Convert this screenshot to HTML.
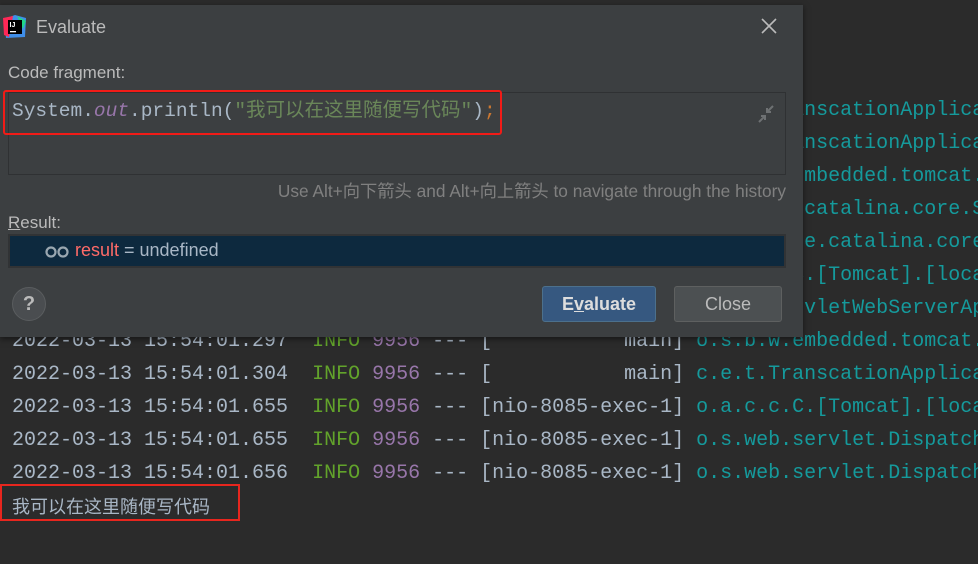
<!DOCTYPE html>
<html><head><meta charset="utf-8"><style>
*{margin:0;padding:0;box-sizing:border-box}
body{width:978px;height:564px;background:#2b2b2b;position:relative;overflow:hidden;font-family:"Liberation Sans","Noto Sans CJK SC",sans-serif}
.c{position:absolute;left:12px;font-family:"Liberation Mono","Noto Sans CJK SC",monospace;font-size:20px;white-space:pre;color:#a9b7c6;line-height:33px;height:33px}
.g{color:#62a32b}.p{color:#9876aa}.t{color:#159a9c}
.dlg{position:absolute;left:0;top:5px;width:803px;height:332px;background:#3c3f41;box-shadow:0 2px 6px rgba(0,0,0,.5)}
.a{position:absolute;white-space:pre}
</style></head><body>
<div class="c" style="top:-29px">                          |      |   |  /  /  /  /</div>
<div class="c" style="top:94px">2022-03-13 15:54:00.000  <span class="g">INFO</span> <span class="p">9956</span> --- [           main] <span class="t">c.e.t.TranscationApplica</span></div>
<div class="c" style="top:127px">2022-03-13 15:54:00.000  <span class="g">INFO</span> <span class="p">9956</span> --- [           main] <span class="t">c.e.t.TranscationApplica</span></div>
<div class="c" style="top:160px">2022-03-13 15:54:00.000  <span class="g">INFO</span> <span class="p">9956</span> --- [           main] <span class="t">o.s.b.w.embedded.tomcat.</span></div>
<div class="c" style="top:193px">2022-03-13 15:54:00.000  <span class="g">INFO</span> <span class="p">9956</span> --- [           main] <span class="t">o.apache.catalina.core.S</span></div>
<div class="c" style="top:226px">2022-03-13 15:54:00.000  <span class="g">INFO</span> <span class="p">9956</span> --- [           main] <span class="t">org.apache.catalina.core</span></div>
<div class="c" style="top:259px">2022-03-13 15:54:00.000  <span class="g">INFO</span> <span class="p">9956</span> --- [           main] <span class="t">o.a.c.c.C.[Tomcat].[loca</span></div>
<div class="c" style="top:292px">2022-03-13 15:54:00.000  <span class="g">INFO</span> <span class="p">9956</span> --- [           main] <span class="t">w.s.c.ServletWebServerAp</span></div>
<div class="c" style="top:325px">2022-03-13 15:54:01.297  <span class="g">INFO</span> <span class="p">9956</span> --- [           main] <span class="t">o.s.b.w.embedded.tomcat.</span></div>
<div class="c" style="top:358px">2022-03-13 15:54:01.304  <span class="g">INFO</span> <span class="p">9956</span> --- [           main] <span class="t">c.e.t.TranscationApplica</span></div>
<div class="c" style="top:391px">2022-03-13 15:54:01.655  <span class="g">INFO</span> <span class="p">9956</span> --- [nio-8085-exec-1] <span class="t">o.a.c.c.C.[Tomcat].[loca</span></div>
<div class="c" style="top:424px">2022-03-13 15:54:01.655  <span class="g">INFO</span> <span class="p">9956</span> --- [nio-8085-exec-1] <span class="t">o.s.web.servlet.Dispatch</span></div>
<div class="c" style="top:457px">2022-03-13 15:54:01.656  <span class="g">INFO</span> <span class="p">9956</span> --- [nio-8085-exec-1] <span class="t">o.s.web.servlet.Dispatch</span></div>
<div class="a" style="left:12px;top:494px;font-size:18px;color:#a9b7c6;font-family:'Noto Sans CJK SC',sans-serif;line-height:24px">我可以在这里随便写代码</div>
<div class="a" style="left:0;top:484px;width:240px;height:37px;border:2px solid #e8261e"></div>

<div class="dlg">
  <svg class="a" style="left:3px;top:10px" width="24" height="24" viewBox="0 0 24 24"><polygon points="1,4 12,0 23,3 22,22 3,23" fill="#3f8ee9"/><polygon points="0,3 10,1 6,22 1,20" fill="#fe2857"/><polygon points="14,1 23,6 20,14" fill="#21d789"/><rect x="5" y="5" width="14" height="14" fill="#000"/><text x="6.5" y="12" font-size="7" font-weight="bold" fill="#fff" font-family="Liberation Sans">IJ</text><rect x="7" y="16" width="6" height="1.3" fill="#fff"/></svg>
  <div class="a" style="left:36px;top:12px;font-size:18px;color:#bbbbbb">Evaluate</div>
  <svg class="a" style="left:760px;top:12px" width="18" height="18"><path d="M2 2L16 16M16 2L2 16" stroke="#bbb" stroke-width="1.6"/></svg>
  <div class="a" style="left:8px;top:58px;font-size:17px;color:#bbbbbb">Code fragment:</div>
  <div class="a" style="left:8px;top:87px;width:778px;height:83px;border:1px solid #2f3133;background:#3c3f41"></div>
  <div class="a" style="left:12px;top:93px;font-size:19.5px;line-height:26px;font-family:'Liberation Mono','Noto Sans CJK SC',monospace;color:#a9b7c6">System.<i style="color:#9876aa">out</i>.println(<span style="color:#6a8759">"我可以在这里随便写代码"</span>)<span style="color:#cc7832">;</span></div>
  <div class="a" style="left:3px;top:85px;width:499px;height:45px;border:2.5px solid #f21b17;border-radius:3px"></div>
  <svg class="a" style="left:756px;top:99px" width="20" height="20"><path d="M17 2L11 8M11 4V8H15" stroke="#6e7173" stroke-width="2" fill="none"/><path d="M3 18L9 12M5 12H9V16" stroke="#6e7173" stroke-width="2" fill="none"/></svg>
  <div class="a" style="right:17px;top:172px;font-size:17.3px;color:#808080">Use Alt+向下箭头 and Alt+向上箭头 to navigate through the history</div>
  <div class="a" style="left:8px;top:208px;font-size:17px;color:#bbbbbb"><u>R</u>esult:</div>
  <div class="a" style="left:8px;top:229px;width:778px;height:34px;background:#0d293e;border:2px solid #313335"></div>
  <svg class="a" style="left:45px;top:240px" width="25" height="14"><circle cx="6" cy="7" r="4.5" stroke="#9aa7b0" stroke-width="2.2" fill="none"/><circle cx="18" cy="7" r="4.5" stroke="#9aa7b0" stroke-width="2.2" fill="none"/></svg>
  <div class="a" style="left:75px;top:235px;font-size:18px;color:#a9b7c6"><span style="color:#ff6b68">result</span> = undefined</div>
  <div class="a" style="left:12px;top:282px;width:34px;height:34px;border-radius:50%;background:#4a4d50;border:1px solid #5a5d5f;color:#bbb;font-weight:bold;font-size:20px;text-align:center;line-height:32px">?</div>
  <div class="a" style="left:542px;top:281px;width:114px;height:36px;background:#365880;border:1px solid #4c708c;border-radius:3px;color:#dddddd;font-weight:bold;font-size:18px;text-align:center;line-height:35px">E<u>v</u>aluate</div>
  <div class="a" style="left:674px;top:281px;width:108px;height:36px;background:#4c5052;border:1px solid #5e6060;border-radius:3px;color:#bbbbbb;font-size:18px;text-align:center;line-height:35px">Close</div>
</div>
</body></html>
